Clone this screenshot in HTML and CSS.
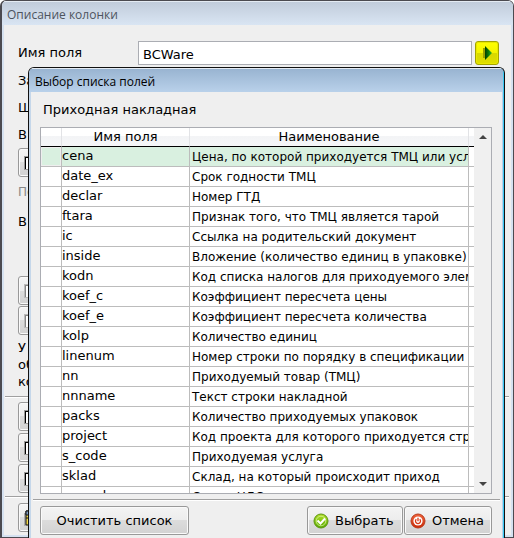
FILE: index.html
```
<!DOCTYPE html>
<html lang="ru">
<head>
    <meta charset="UTF-8">
    <meta name="viewport" content="width=device-width, initial-scale=1.0">
    <title>Описание колонки</title>
    <link rel="stylesheet" href="styles.css">
</head>
<body>

<!-- Column window -->
<div class="window">
    <div class="titlebar">Описание колонки</div>
    <div class="form">
        <div class="field">
            <label for="fieldName">Имя поля</label>
            <input type="text" id="fieldName" value="BCWare">
            <button type="button" class="pick" aria-label="Выбор списка полей">
                <svg width="10" height="14" viewBox="0 0 10 14">
                    <defs>
                        <linearGradient id="arrow">
                            <stop offset="0" stop-color="#003c00"/>
                            <stop offset="0.5" stop-color="#087a08"/>
                            <stop offset="1" stop-color="#35b52a"/>
                        </linearGradient>
                    </defs>
                    <path d="M1 2v10" stroke="#9aa000" stroke-width="2"/>
                    <path d="M2 0l7 7-7 7z" fill="url(#arrow)"/>
                </svg>
            </button>
        </div>
        <div class="line">За</div>
        <div class="line">Ш</div>
        <div class="line">В</div>
        <button type="button" class="tool" aria-label="П"><span class="sheet"></span></button>
        <div class="line disabled">По</div>
        <div class="line">В</div>
        <div class="group upper">
            <button type="button" class="tool" disabled aria-label="П"><span class="sheet"></span></button>
            <button type="button" class="tool" disabled aria-label="П"><span class="sheet"></span></button>
        </div>
        <p class="note">У<br>об<br>ко</p>
        <hr>
        <div class="group">
            <button type="button" class="tool" aria-label="П"><span class="sheet"></span></button>
            <button type="button" class="tool" aria-label="П"><span class="sheet"></span></button>
            <button type="button" class="tool" aria-label="П"><span class="sheet"></span></button>
        </div>
        <hr>
        <button type="button" class="tool save" aria-label="Сохранить">
            <svg width="18" height="18" viewBox="0 0 18 18">
                <path d="M0 4h2v13H0z" fill="#aaa"/>
                <path d="M2 2h15v14H2z" fill="#f2d94a" stroke="#111"/>
                <path d="M2 2h15v4H2z" fill="#7f9cc0" stroke="#111"/>
                <path d="M2 9h15" stroke="#111"/>
            </svg>
        </button>
    </div>
</div>

<!-- Field list dialog -->
<div class="dialog" role="dialog" aria-labelledby="dialogTitle">
    <div class="titlebar" id="dialogTitle">Выбор списка полей</div>
    <div class="content">
        <p class="caption">Приходная накладная</p>
        <div class="grid">
            <table>
                <colgroup>
                    <col class="mark"><col class="name"><col><col class="rest">
                </colgroup>
                <thead>
                    <tr><th></th><th>Имя поля</th><th>Наименование</th><th></th></tr>
                </thead>
                <tbody>
                    <tr class="selected"><td></td><td>cena</td><td>Цена, по которой приходуется ТМЦ или услуга</td><td></td></tr>
                    <tr><td></td><td>date_ex</td><td>Срок годности ТМЦ</td><td></td></tr>
                    <tr><td></td><td>declar</td><td>Номер ГТД</td><td></td></tr>
                    <tr><td></td><td>ftara</td><td>Признак того, что ТМЦ является тарой</td><td></td></tr>
                    <tr><td></td><td>ic</td><td>Ссылка на родительский документ</td><td></td></tr>
                    <tr><td></td><td>inside</td><td>Вложение (количество единиц в упаковке)</td><td></td></tr>
                    <tr><td></td><td>kodn</td><td>Код списка налогов для приходуемого элемента</td><td></td></tr>
                    <tr><td></td><td>koef_c</td><td>Коэффициент пересчета цены</td><td></td></tr>
                    <tr><td></td><td>koef_e</td><td>Коэффициент пересчета количества</td><td></td></tr>
                    <tr><td></td><td>kolp</td><td>Количество единиц</td><td></td></tr>
                    <tr><td></td><td>linenum</td><td>Номер строки по порядку в спецификации</td><td></td></tr>
                    <tr><td></td><td>nn</td><td>Приходуемый товар (ТМЦ)</td><td></td></tr>
                    <tr><td></td><td>nnname</td><td>Текст строки накладной</td><td></td></tr>
                    <tr><td></td><td>packs</td><td>Количество приходуемых упаковок</td><td></td></tr>
                    <tr><td></td><td>project</td><td>Код проекта для которого приходуется строка</td><td></td></tr>
                    <tr><td></td><td>s_code</td><td>Приходуемая услуга</td><td></td></tr>
                    <tr><td></td><td>sklad</td><td>Склад, на который происходит приход</td><td></td></tr>
                    <tr><td></td><td>sumnds</td><td>Сумма НДС</td><td></td></tr>
                </tbody>
            </table>
            <div class="scrollbar">
                <svg width="8" height="4" viewBox="0 0 8 4"><path d="M0 4l4-4 4 4z" fill="#444"/></svg>
                <svg width="8" height="4" viewBox="0 0 8 4"><path d="M0 0l4 4 4-4z" fill="#444"/></svg>
            </div>
        </div>
    </div>
    <hr>
    <div class="buttons">
        <button type="button" class="clear">Очистить список</button>
        <button type="button" class="choose">
            <svg width="16" height="16" viewBox="0 0 16 16">
                <defs>
                    <linearGradient id="green" x2="0" y2="1">
                        <stop offset="0" stop-color="#b5e228"/>
                        <stop offset="1" stop-color="#55a800"/>
                    </linearGradient>
                </defs>
                <circle cx="8" cy="8" r="7" fill="url(#green)" stroke="#5d9413"/>
                <circle cx="8" cy="8" r="4.8" fill="none" stroke="#d9f0a0" stroke-width="0.8"/>
                <path d="M4.5 7.5l3 3 4.5-5" fill="none" stroke="#fff" stroke-width="2"/>
            </svg>
            Выбрать
        </button>
        <button type="button" class="cancel">
            <svg width="16" height="16" viewBox="0 0 16 16">
                <defs>
                    <linearGradient id="red" x2="0" y2="1">
                        <stop offset="0" stop-color="#f0643c"/>
                        <stop offset="1" stop-color="#c92a08"/>
                    </linearGradient>
                </defs>
                <circle cx="8" cy="8" r="7" fill="url(#red)" stroke="#b93a1c"/>
                <circle cx="8" cy="8" r="4.6" fill="#fff"/>
                <path d="M6.3 6.2a2.5 2.5 0 1 0 3.4 0M8 4.8v3.4" fill="none" stroke="#d93a16" stroke-width="1.3"/>
            </svg>
            Отмена
        </button>
    </div>
</div>

</body>
</html>
```
FILE: styles.css
```
* {
    box-sizing: border-box;
}
body {
    margin: 0;
    height: 100vh;
    overflow: hidden;
    position: relative;
    background-color: #fff;
    font-family: Verdana, "DejaVu Sans", sans-serif;
    font-size: 13px;
    color: #000;
}
p {
    margin: 0;
}
hr {
    margin: 0;
    border: none;
    border-top: 1px solid #a0a0a0;
    border-bottom: 1px solid #fff;
}
button {
    padding: 0;
    font: inherit;
    color: #000;
    border: 1px solid #999;
    border-radius: 3px;
    background: linear-gradient(#f4f4f4, #ececec 50%, #dcdcdc 50%, #d2d2d2);
    box-shadow: inset 0 0 0 1px #fafafa;
}

/* windows */
.window {
    height: 100vh;
    overflow: hidden;
    border: 1px solid #4b4a50;
    border-left-width: 2px;
    border-radius: 6px 6px 0 0;
    background-color: #efefef;
    box-shadow: inset 2px 0 #d5e1f0, inset -2px 0 #d5e1f0, inset 0 -2px #d5e1f0;
}
.titlebar {
    height: 24px;
    padding-left: 5px;
    line-height: 26px;
    font-family: "Segoe UI", "Open Sans", sans-serif;
    font-size: 12px;
    color: #4d545e;
    background: linear-gradient(#c1ccdb, #d9e5f3);
    border-top: 1px solid #e4ebf3;
}
.dialog {
    position: absolute;
    top: 67px;
    left: 28px;
    right: 9px;
    height: 480px;
    overflow: hidden;
    border: 1px solid #111;
    border-bottom: none;
    border-radius: 6px 6px 0 0;
    background-color: #efefef;
    box-shadow: inset 2px 0 #c5d7ea, inset -1px 0 #38c8f2, inset -2px 0 #b9d1ea;
}
.dialog .titlebar {
    margin-right: 1px;
    padding-left: 6px;
    color: #000;
    background: linear-gradient(#99b4d1, #b9d1ea);
}

/* column form */
.form {
    padding: 16px 14px 0 16px;
}
.field {
    display: flex;
    align-items: center;
    height: 24px;
    margin-bottom: 2px;
}
.field label {
    width: 120px;
    padding-bottom: 2px;
}
.field input {
    flex: 1;
    min-width: 0;
    height: 24px;
    margin-right: 3px;
    padding: 3px 4px 0;
    font: inherit;
    border: 1px solid #abadb3;
    background-color: #fff;
}
.pick {
    display: flex;
    align-items: center;
    justify-content: center;
    width: 24px;
    height: 24px;
    padding-left: 2px;
    border-color: #a3a300;
    background: linear-gradient(#ff0, #f4f400 50%, #d8d800 50%, #dede00);
    box-shadow: inset 0 0 0 1px #e8e800;
}
.line {
    height: 27px;
    line-height: 27px;
}
.disabled {
    height: 31px;
    line-height: 31px;
    font-size: 12px;
    color: #888;
}
.tool {
    display: flex;
    align-items: center;
    width: 120px;
    height: 29px;
    padding-left: 5px;
}
.sheet {
    width: 14px;
    height: 14px;
    border: 1px solid #999;
    background-color: #fff;
    box-shadow: inset 1px 1px #000;
}
.tool:disabled .sheet {
    border-color: #bbb;
    box-shadow: inset 1px 1px #888;
}
.group {
    display: grid;
    gap: 2px;
    margin: 4px 0 3px;
}
.upper {
    gap: 1px;
    margin: 41px 0 4px;
}
.note {
    margin-bottom: 6px;
    line-height: 17px;
}
.form hr {
    margin: 0 -10px 0 -13px;
}
.save {
    margin-top: 5px;
}

/* field list */
.content {
    padding: 9px 12px 5px 11px;
}
.caption {
    padding-left: 3px;
    line-height: 18px;
    margin-bottom: 8px;
}
.grid {
    display: flex;
    align-items: flex-start;
    height: 367px;
    overflow: hidden;
    border: 1px solid #abadb3;
    background-color: #fff;
}
table {
    flex: 1;
    width: 100%;
    min-width: 0;
    table-layout: fixed;
    border-collapse: separate;
    border-spacing: 0;
}
.mark {
    width: 21px;
}
.name {
    width: 128px;
}
.rest {
    width: 5px;
}
th {
    height: 19px;
    padding: 0;
    line-height: 18px;
    font-weight: normal;
    border-right: 1px solid #e2e3e6;
    border-bottom: 1px solid #000;
    background: linear-gradient(#fff 45%, #f3f4f6 45%, #f5f6f8);
}
td {
    height: 20px;
    padding: 0 0 1px;
    line-height: 18px;
    overflow: hidden;
    white-space: nowrap;
    border-right: 1px solid #bcbcbc;
    border-bottom: 1px solid #bcbcbc;
}
td:nth-child(3) {
    padding: 1px 0 0 2px;
    font-size: 12px;
}
th:last-child,
td:last-child {
    border-right: none;
}
.selected td {
    background-color: #d9f0e0;
}
.selected td:first-child {
    box-shadow: inset 0 0 0 1px #eee;
}
.selected td:last-child {
    background-color: #fff;
}
.scrollbar {
    display: flex;
    flex: none;
    flex-direction: column;
    align-items: center;
    justify-content: space-between;
    align-self: stretch;
    width: 17px;
    padding: 7px 0;
    background-color: #f0f0f0;
}

/* dialog buttons */
.dialog hr {
    margin: 0 4px;
}
.buttons {
    display: flex;
    gap: 1px;
    padding: 5px 12px 0 11px;
}
.buttons button {
    display: flex;
    align-items: center;
    height: 29px;
}
.buttons svg {
    margin-right: 6px;
}
.buttons .clear {
    justify-content: center;
    width: 149px;
    margin-right: auto;
}
.choose {
    width: 96px;
}
.cancel {
    width: 88px;
}
.buttons .choose,
.buttons .cancel {
    padding-left: 5px;
}
```
